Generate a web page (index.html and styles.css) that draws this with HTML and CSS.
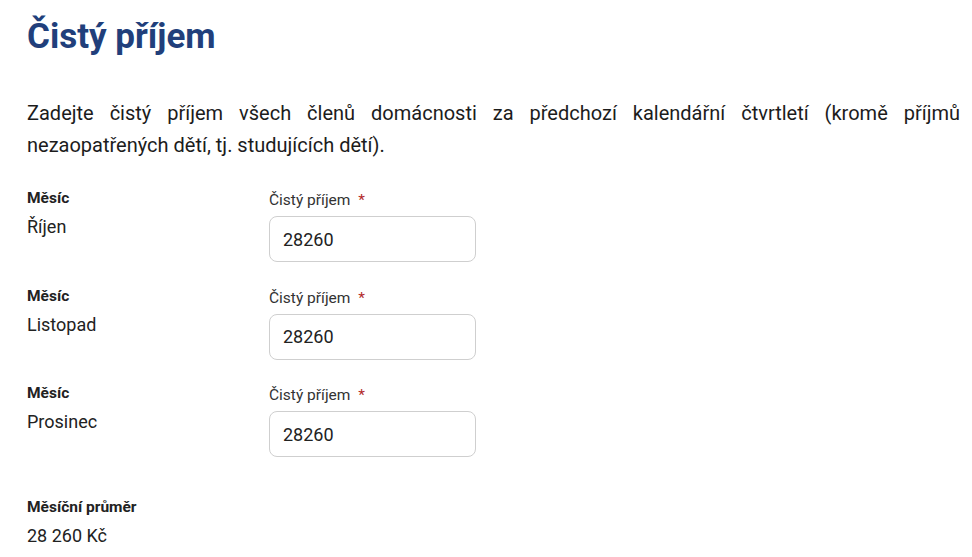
FILE: index.html
```html
<!DOCTYPE html>
<html lang="cs">
<head>
<meta charset="utf-8">
<title>Čistý příjem</title>
<link rel="stylesheet" href="styles.css">
</head>
<body>
<main class="page">
  <h1 class="title">Čistý příjem</h1>
  <p class="intro">Zadejte čistý příjem všech členů domácnosti za předchozí kalendářní čtvrtletí (kromě příjmů nezaopatřených dětí, tj. studujících dětí).</p>

  <div class="rows">
    <div class="row">
      <div class="month">
        <div class="label">Měsíc</div>
        <div class="value">Říjen</div>
      </div>
      <div class="field">
        <label class="field-label">Čistý příjem <span class="req">*</span></label>
        <div class="input">28260</div>
      </div>
    </div>
    <div class="row">
      <div class="month">
        <div class="label">Měsíc</div>
        <div class="value">Listopad</div>
      </div>
      <div class="field">
        <label class="field-label">Čistý příjem <span class="req">*</span></label>
        <div class="input">28260</div>
      </div>
    </div>
    <div class="row">
      <div class="month">
        <div class="label">Měsíc</div>
        <div class="value">Prosinec</div>
      </div>
      <div class="field">
        <label class="field-label">Čistý příjem <span class="req">*</span></label>
        <div class="input">28260</div>
      </div>
    </div>
  </div>

  <div class="summary">
    <div class="label">Měsíční průměr</div>
    <div class="value">28 260 Kč</div>
  </div>
</main>
</body>
</html>
```

FILE: styles.css
```css
* { box-sizing: border-box; }
html, body { margin: 0; padding: 0; background: #fff; }
body {
  font-family: Roboto, "Noto Sans", sans-serif;
  color: #1c1c1c;
}
.page {
  padding: 17px 12px 0 27px;
  width: 972px;
}
.title {
  margin: 0;
  font-size: 35px;
  line-height: 40px;
  font-weight: 700;
  color: #213f7b;
}
.intro {
  margin: 40px 0 0 0;
  font-size: 20px;
  line-height: 32px;
  text-align: justify;
  color: #1c1c1c;
}
.rows {
  margin-top: 27px;
  display: flex;
  flex-direction: column;
}
.row {
  display: grid;
  grid-template-columns: 242px 207px;
  height: 97.5px;
}
.label {
  font-size: 15.5px;
  font-weight: 700;
  line-height: 20px;
  color: #222;
}
.value {
  font-size: 18px;
  line-height: 24px;
  margin-top: 7px;
  color: #222;
}
.field { padding-top: 2px; }
.field-label {
  display: block;
  font-size: 15.5px;
  line-height: 20px;
  color: #333;
}
.req { color: #b22a2a; margin-left: 4px; }
.input {
  margin-top: 6px;
  height: 46px;
  border: 1px solid #cfcfcf;
  border-radius: 8px;
  padding: 0 13px;
  display: flex;
  align-items: center;
  font-size: 18px;
  color: #222;
}
.summary {
  margin-top: 16.5px;
}
.summary .value { margin-top: 7px; }
```
